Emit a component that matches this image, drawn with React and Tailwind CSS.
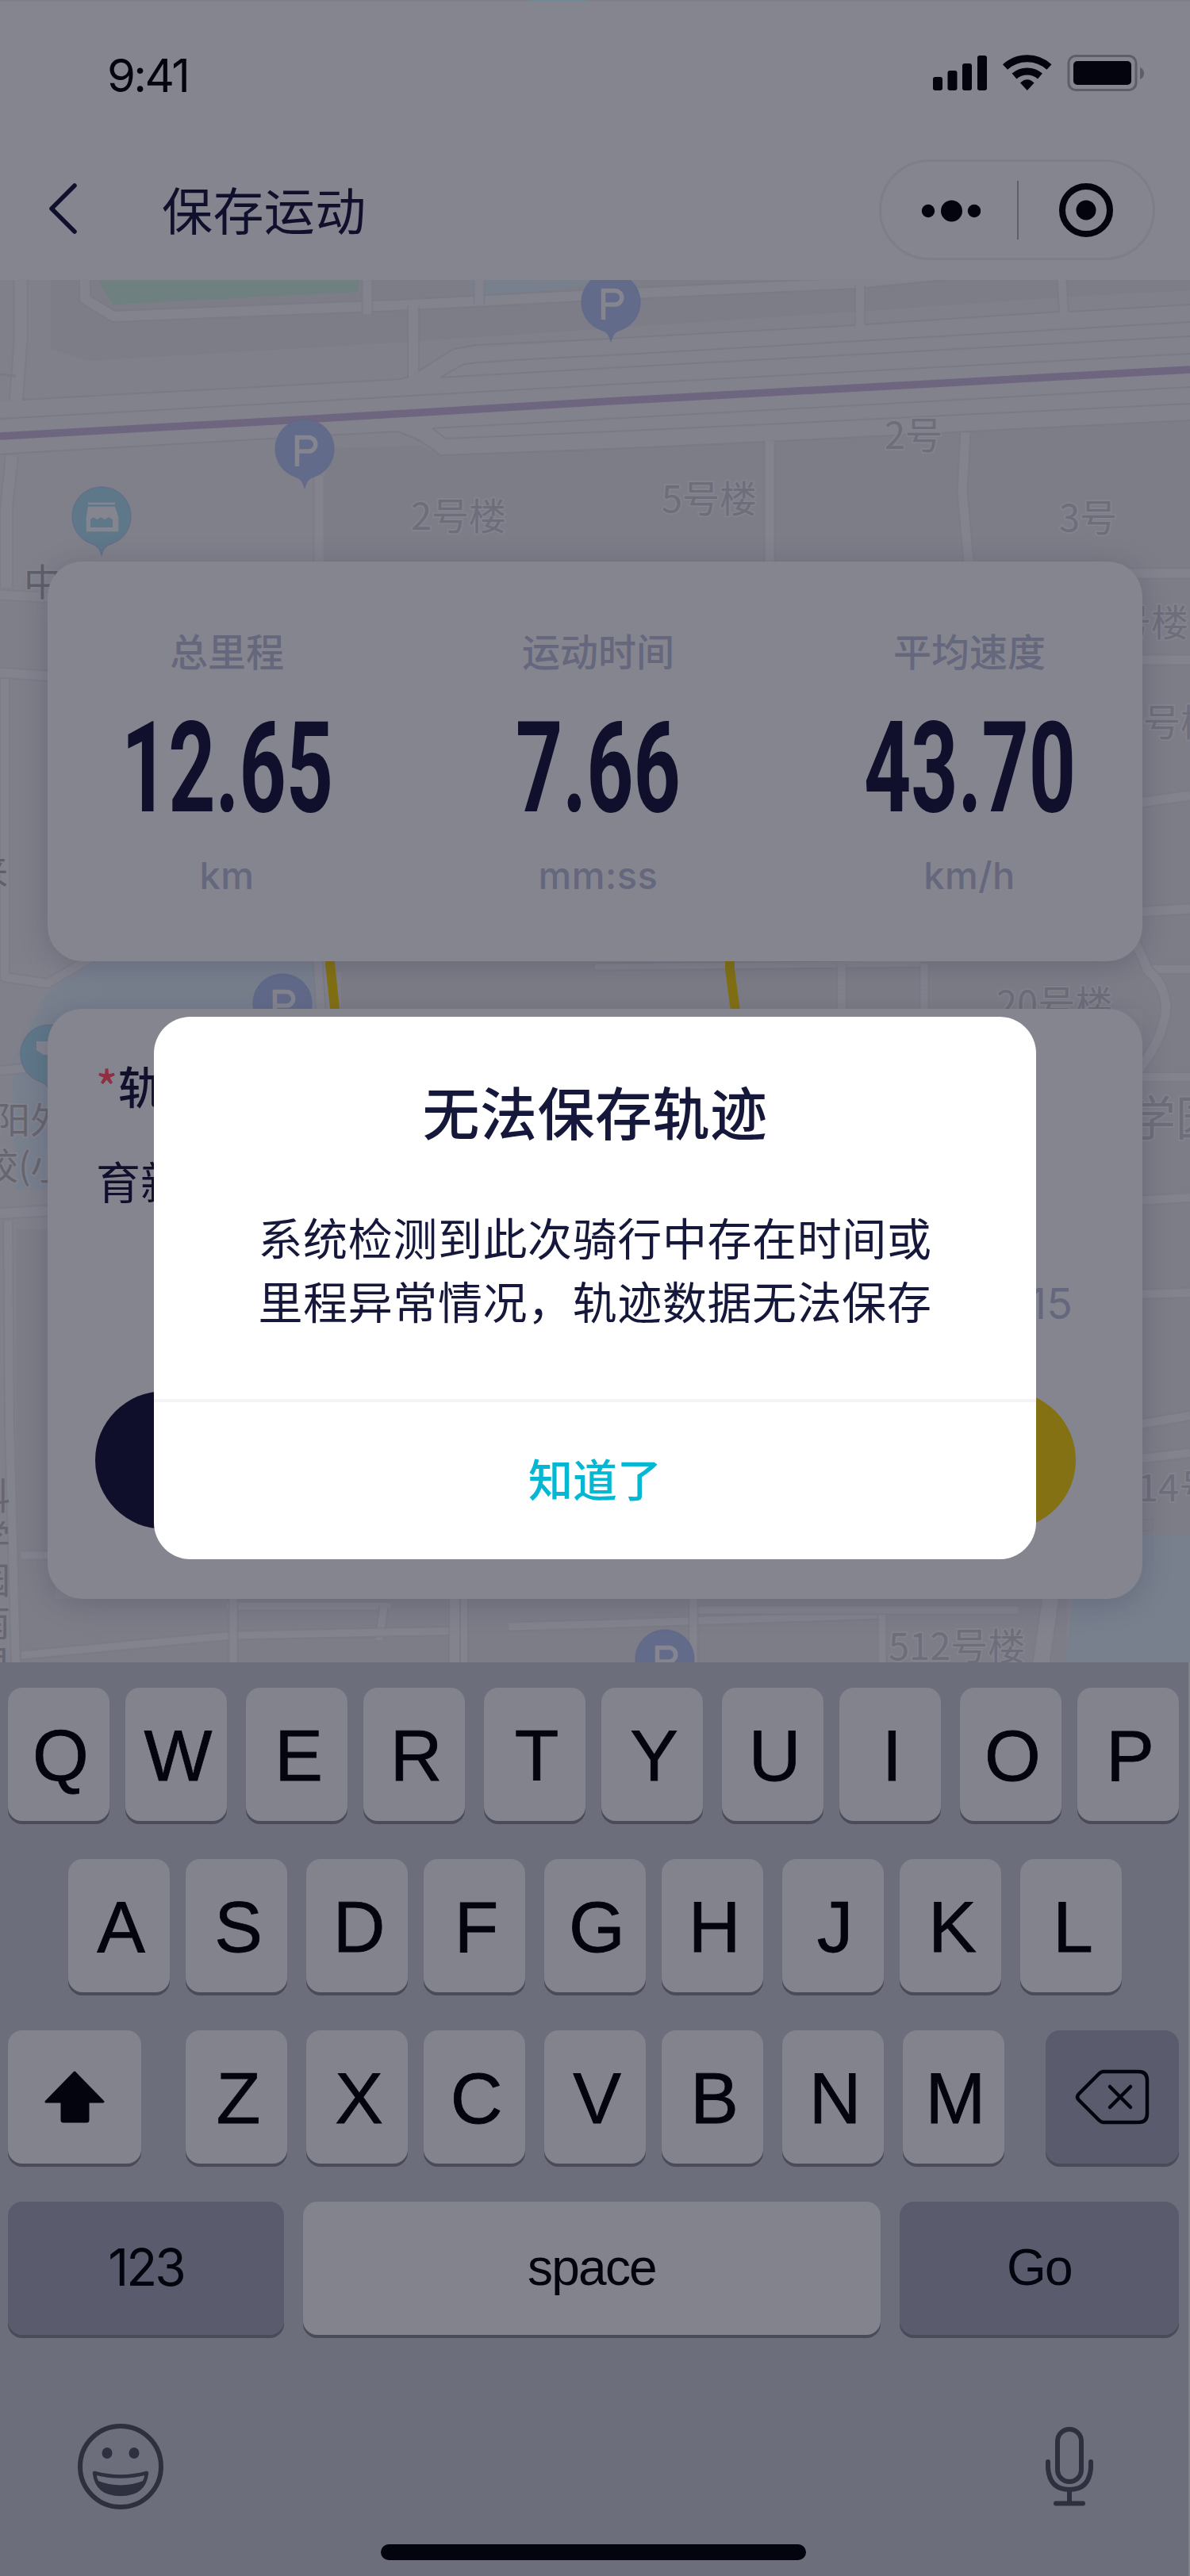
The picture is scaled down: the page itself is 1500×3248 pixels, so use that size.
import React from "react";

const CJK = "font-['Noto_Sans_CJK_SC',sans-serif]";
const ARIAL = "font-['Liberation_Sans',Arial,sans-serif]";
const INTER = "font-['Inter',sans-serif]";

const road = "#83838e";
const edge = "#7a7a86";
const land = "#7d7d88";

// A street: a wide stroke with a slightly darker casing.
function Road({ d, w = 12 }) {
  return (
    <g fill="none" strokeLinejoin="round">
      <path d={d} stroke={edge} strokeOpacity="0.6" strokeWidth={w + 4} />
      <path d={d} stroke={road} strokeWidth={w} />
    </g>
  );
}

function Label({ x, y, size = 47, fill = "#6e6e7a", children }) {
  return (
    <text
      x={x}
      y={y + size * 0.37}
      fontSize={size}
      fill={fill}
      stroke="#83838e"
      strokeWidth="4"
      strokeLinejoin="round"
      paintOrder="stroke"
      fontFamily="'Noto Sans CJK SC', sans-serif"
    >
      {children}
    </text>
  );
}

function Pin({ x, y, fill = "#636b8b", children }) {
  return (
    <g transform={`translate(${x} ${y})`}>
      <path
        d="M0 49C-2 40-5 36-12 34A37 37 0 1 1 12 34C5 36 2 40 0 49Z"
        fill={fill}
        stroke="#5f6789"
        strokeWidth="1.5"
        strokeOpacity="0.6"
      />
      {children}
    </g>
  );
}

function Parking({ x, y }) {
  return (
    <Pin x={x} y={y}>
      <path
        d="M-9.500 21V-15.500H5A8.500 8.500 0 0 1 5 2H-9.500"
        fill="none"
        stroke="#858590"
        strokeWidth="5.500"
      />
    </Pin>
  );
}

function CityMap() {
  return (
    <svg
      className="absolute left-0 top-0 h-[3248px] w-[1500px]"
      viewBox="0 0 1500 3248"
    >
      <rect width="1500" height="3248" fill="#80808b" />
      <rect x="668" y="0" width="72" height="3" fill="#6f8a95" />
      <path d="M64 353V440L112 455L500 432L1078 393L1335 375L1500 366V353Z" fill={land} />
      <path d="M124 353H452V368L142 384Z" fill="#6e8080" />
      <path d="M592 353H760L700 366L592 372Z" fill="#78808e" />
      <path d="M410 565L530 562L555 574L965 557L1500 530V1225H410Z" fill={land} />
      <path d="M0 760H60V848H0ZM10 855H60V1215H10Z" fill="#7f7f8a" />
      <path d="M430 1212H1500V1936H1440V1272H430Z" fill={land} />
      <path d="M20 1550H70V2096H20ZM60 2016H1345V2096H60Z" fill={land} />

      <Road d="M26 345L26 430L20 510" w={15} />
      <path d="M0 472L20 474" stroke={edge} strokeWidth="3" />
      <Road d="M107 345V377L143 399L520 384L750 372L1080 357L1200 345" />
      <Road d="M463 345V396" w={11} />
      <Road d="M604 345V384" w={11} />
      <Road d="M521 386V480" w={12} />
      <Road d="M1084 360V412" w={10} />
      <Road d="M1338 345L1341 395" w={10} />

      {/* Expressway band and the metro line that runs along it */}
      <path d="M0 506L28 504L512 477L572 441L750 429L1084 409L1500 384V530L965 557L555 574L530 553L500 544L28 571L0 572Z" fill="#82828d" />
      <g fill="none" stroke={edge} strokeWidth="2">
        <path d="M28 504L505 478L514 475V390" />
        <path d="M527 468L572 440L600 435L750 428L1078 410M1090 409L1335 393M1348 393L1500 384" />
        <path d="M555 476L583 460Q592 456 750 449L1500 406" />
        <path d="M555 476L750 465L1500 424" />
        <path d="M0 528L750 486L1500 446" />
        <path d="M545 540L750 529L1500 488" />
        <path d="M545 540L562 553L750 545L965 535L1500 509" />
        <path d="M0 573L28 571L500 544Q530 553 555 574L750 567L965 557L1500 530" />
      </g>
      <path d="M0 550L380 529L750 507L1500 466" fill="none" stroke="#6e657e" strokeWidth="9.500" />

      <Road d="M402 600V720" w={11} />
      <Road d="M15 575L8 640V740" w={14} />
      <Road d="M970 556V720" w={11} />
      <Road d="M1217 545L1213 620L1222 720" w={11} />

      <Road d="M0 750L70 754" w={11} />
      <Road d="M0 848L70 853" w={11} />
      <Road d="M6 856V1232L60 1240L118 1206" w={10} />
      <path d="M118 1213H400V1290H60L15 1340L60 1250Z" fill="#78808e" />
      <path d="M15 1340H60V1500H20Z" fill="#78808e" />
      <Road d="M400 1205L405 1280" w={10} />
      <Road d="M0 1350L60 1344" w={10} />
      <Road d="M0 1530L70 1526" w={12} />
      <Road d="M10 1540L12 1800L20 2100" w={10} />
      <Road d="M27 1961H80" w={9} />

      <Road d="M1420 723H1500" w={11} />
      <Road d="M1430 832H1500" w={11} />
      <Road d="M1430 1013L1500 1003" w={11} />
      <Road d="M1430 1150L1500 1146" w={11} />
      <Road d="M1440 1222H1500" w={10} />
      <Road d="M1432 1190L1448 1225Q1468 1240 1470 1272Q1466 1310 1436 1348" w={11} />
      <Road d="M1430 1358H1500" w={10} />
      <Road d="M1430 1514L1500 1510" w={10} />
      <Road d="M1430 1632L1500 1630" w={10} />
      <Road d="M1430 1797L1500 1785" w={10} />
      <Road d="M1430 1840L1500 1832" w={10} />
      <path d="M1440 1916H1453V1930H1440" fill="none" stroke={edge} strokeWidth="2" />
      <Road d="M750 1219L1160 1215" w={7} />
      <Road d="M1061 1215V1280" w={10} />
      <Road d="M1165 1215V1280" w={9} />

      <Road d="M286 2025H492" w={9} />
      <Road d="M484 2025L478 2068" w={9} />
      <Road d="M27 2087L294 2062L588 2056" w={9} />
      <Road d="M294 2010V2100" w={9} />
      <Road d="M573 2010V2100" w={12} />
      <Road d="M585 2010V2100" w={8} />
      <Road d="M641 2051L750 2048L1112 2036" w={9} />
      <Road d="M874 2030H1283" w={9} />
      <Road d="M874 2010V2100" w={9} />
      <Road d="M1112 2036V2100" w={9} />
      <Road d="M1325 2010L1312 2100" w={20} />
      <path d="M1430 1936H1500V2096H1343L1352 2016Z" fill="#78808e" />
      <path d="M1498 2096V3248" stroke="#80808b" strokeWidth="4" />

      {/* Recorded track */}
      <path d="M415 1205L424 1290" stroke="#837113" strokeWidth="12" />
      <path d="M920 1205V1222L929 1290" fill="none" stroke="#837113" strokeWidth="12" />

      <Label x={518} y={651}>2号楼</Label>
      <Label x={834} y={629}>5号楼</Label>
      <Label x={1115} y={549}>2号</Label>
      <Label x={1335} y={653}>3号</Label>
      <Label x={1404} y={785}>号楼</Label>
      <Label x={1441} y={911}>号楼</Label>
      <Label x={1256} y={1266}>20号楼</Label>
      <Label x={1422} y={1410} size={60}>学园</Label>
      <Label x={1434} y={1876}>14号</Label>
      <Label x={1120} y={2076}>512号楼</Label>
      <Label x={30} y={734} fill="#5f5f6a">中</Label>
      <Label x={-35} y={1099} size={45} fill="#5f5f6a">来</Label>
      <Label x={-8} y={1412} size={46} fill="#666671">阳外</Label>
      <Label x={-23} y={1470} size={46} fill="#666671">校(小</Label>
      <text
        x="-10"
        y="1863"
        fontSize="46"
        letterSpacing="7"
        fill="#666671"
        fontFamily="'Noto Sans CJK SC', sans-serif"
        className="[writing-mode:vertical-rl]"
      >
        科学园南里
      </text>

      <Parking x={770} y={382} />
      <Parking x={384} y={567} />
      <Parking x={356} y={1266} />
      <Parking x={838} y={2093} />
      <Pin x={128} y={652} fill="#5f7889">
        <path d="M-17-17H17M-16-12H16L20 0V17H-18V0Z" fill="#858590" stroke="#858590" strokeWidth="2.5" />
        <path d="M-14 13V3L-10 0L-6 3L-1 0L4 3L9 0L14 3V13Z" fill="#5f7889" />
      </Pin>
      <Pin x={63} y={1330} fill="#5f7889">
        <path d="M-17-17H6V0H-8L-17-6Z" fill="#858590" />
      </Pin>
    </svg>
  );
}

function StatusBar() {
  return (
    <div className="flex h-[180px] items-start justify-between pl-[135px] pr-[56px]">
      <span className={`${INTER} mt-[62px] text-[58px] leading-[62px] tracking-[-2.6px] text-[#04040f]`}>
        9:41
      </span>
      <svg className="mt-[62px] h-[56px] w-[270px]" viewBox="1174 64 270 56" fill="#04040f">
        <rect x="1176" y="97" width="12" height="17" rx="3" />
        <rect x="1194.500" y="89" width="12" height="25" rx="3" />
        <rect x="1213" y="80" width="12" height="34" rx="3" />
        <rect x="1232" y="70" width="12" height="44" rx="3" />
        <g fill="none" stroke="#04040f" strokeWidth="9">
          <path d="M1267 84.500A41 41 0 0 1 1322.500 84.500" />
          <path d="M1278.500 96A25 25 0 0 1 1311 96" />
        </g>
        <path d="M1294.800 114L1286 104.500Q1294.800 96 1303.600 104.500Z" />
        <rect x="1347" y="70.500" width="85" height="43" rx="9" fill="none" stroke="#5e5e69" strokeWidth="3" />
        <rect x="1353" y="77" width="73" height="30" rx="5" />
        <path d="M1437 85Q1442 87 1442 92.500Q1442 98 1437 100Z" fill="#5e5e69" />
      </svg>
    </div>
  );
}

function NavBar() {
  return (
    <div className="flex h-[171px] items-start pl-[58px] pr-[44px]">
      <svg className="mt-[46px] h-[68px] w-[42px]" viewBox="60 229 42 68">
        <path d="M96 235L67 264L96 293" fill="none" stroke="#10102c" strokeWidth="5.500" strokeLinecap="round" strokeLinejoin="round" />
      </svg>
      <h1 className={`${CJK} ml-[104px] mt-[32px] text-[64px] leading-[96px] tracking-[0.4px] text-[#10102c]`}>保存运动</h1>
      <div className="ml-auto mt-[19px] flex h-[127px] w-[348px] items-center rounded-full border-[3px] border-[#7e7e89]">
        <svg className="ml-[45px] h-[30px] w-[80px]" viewBox="0 0 80 30" fill="#04040f">
          <circle cx="14" cy="16" r="8.200" />
          <circle cx="43.500" cy="16" r="13.500" />
          <circle cx="72" cy="16" r="8.200" />
        </svg>
        <span className="ml-[46px] h-[74px] w-[2px] bg-[#5f5f6b]" />
        <svg className="ml-[50px] h-[70px] w-[70px]" viewBox="0 0 70 70">
          <circle cx="35" cy="35" r="30" fill="none" stroke="#04040f" strokeWidth="8" />
          <circle cx="35" cy="35" r="12.500" fill="#04040f" />
        </svg>
      </div>
    </div>
  );
}

function Stat({ label, value, unit }) {
  return (
    <div className="flex w-[468px] shrink-0 flex-col items-center">
      <span className={`${CJK} text-[48px] font-medium leading-[72px] text-[#65677c]`}>{label}</span>
      <span className="mt-[21px] flex h-[186px] w-[300px] items-center justify-center">
        <span className="scale-x-[0.65] whitespace-nowrap font-['Roboto',sans-serif] text-[159px] font-bold leading-[186px] text-[#10102c]">
          {value}
        </span>
      </span>
      <span className={`${INTER} mt-[12px] text-[47px] font-medium leading-[60px] tracking-[0.500px] text-[#65677c]`}>
        {unit}
      </span>
    </div>
  );
}

const cardShadow = "shadow-[0_6px_36px_rgba(30,30,60,0.22)]";

function StatsCard() {
  return (
    <section className={`flex h-[504px] justify-center rounded-[44px] bg-[#858590] pl-[8px] pt-[75px] ${cardShadow}`}>
      <Stat label="总里程" value="12.65" unit="km" />
      <Stat label="运动时间" value="7.66" unit="mm:ss" />
      <Stat label="平均速度" value="43.70" unit="km/h" />
    </section>
  );
}

function FormCard() {
  return (
    <section className={`mt-[60px] flex h-[744px] flex-col rounded-[44px] bg-[#858590] px-[60px] pt-[54px] ${cardShadow}`}>
      <div className={`${CJK} flex pl-[1px] text-[56px] font-medium leading-[84px] text-[#10102c]`}>
        <span className="w-[28px] text-[#902f40]">*</span>
        <span>轨迹</span>
      </div>
      <div className={`${CJK} mt-[36px] pl-[1px] text-[56px] leading-[84px] text-[#10102c]`}>育新</div>
      <div className={`${INTER} mt-[82px] pr-[28px] text-right text-[54px] leading-[64px] text-[#65677c]`}>15</div>
      <div className="mt-[78px] flex w-[1236px] justify-between">
        <div className="h-[174px] w-[588px] rounded-full bg-[#0f0f2b]" />
        <div className="h-[174px] w-[588px] rounded-full bg-[#837113]" />
      </div>
    </section>
  );
}

function Dialog() {
  return (
    <div className={`${CJK} absolute left-[194px] top-[1282px] flex h-[684px] w-[1112px] flex-col overflow-hidden rounded-[46px] bg-white text-center text-[#16183b]`}>
      <h2 className="mt-[64px] text-[72px] font-medium leading-[108px] tracking-[0.500px]">无法保存轨迹</h2>
      <p className="mt-[65px] text-[56px] leading-[80px] tracking-[0.600px]">
        系统检测到此次骑行中存在时间或
        <br />
        里程异常情况，轨迹数据无法保存
      </p>
      <div className="mt-[85px] flex flex-1 items-center justify-center border-t-4 border-[#f4f4f6] pb-[8px] text-[56px] font-medium text-[#04b7d3]">
        知道了
      </div>
    </div>
  );
}

const keyBase = "flex h-[168px] shrink-0 items-center justify-center rounded-[18px] shadow-[0_4px_0_#4a4a58] text-[#04040f]";
const letterKey = `${keyBase} ${ARIAL} w-[128px] bg-[#83838e] pl-[5px] pt-[3px] text-[91px] leading-none [-webkit-text-stroke:0.8px_#04040f]`;

function Letters({ keys }) {
  return keys.map(([c, gap]) => (
    <div key={c} className={`${letterKey} ${gap}`}>
      {c}
    </div>
  ));
}

const ROW_1 = [["Q", ""], ["W", "ml-5"], ["E", "ml-6"], ["R", "ml-5"], ["T", "ml-6"], ["Y", "ml-5"], ["U", "ml-6"], ["I", "ml-5"], ["O", "ml-6"], ["P", "ml-5"]];
const ROW_2 = [["A", ""], ["S", "ml-5"], ["D", "ml-6"], ["F", "ml-5"], ["G", "ml-6"], ["H", "ml-5"], ["J", "ml-6"], ["K", "ml-5"], ["L", "ml-6"]];
const ROW_3 = [["Z", "ml-14"], ["X", "ml-6"], ["C", "ml-5"], ["V", "ml-6"], ["B", "ml-5"], ["N", "ml-6"], ["M", "ml-6"]];

function Keyboard() {
  return (
    <div className="flex h-[1152px] w-[1498px] flex-col bg-[#6c6e7b] pt-8">
      <div className="flex pl-[10px]">
        <Letters keys={ROW_1} />
      </div>
      <div className="mt-12 flex pl-[86px]">
        <Letters keys={ROW_2} />
      </div>
      <div className="mt-12 flex pl-[10px]">
        <div className={`${keyBase} w-[168px] bg-[#83838e]`}>
          <svg className="h-[70px] w-[80px]" viewBox="54 2607 80 70">
            <path d="M94 2611L130 2648H111V2671Q111 2673 109 2673H80Q78 2673 78 2671V2648H58Z" fill="#04040f" stroke="#04040f" strokeWidth="3" strokeLinejoin="round" />
          </svg>
        </div>
        <Letters keys={ROW_3} />
        <div className={`${keyBase} ml-[52px] w-[168px] bg-[#5a5c6d]`}>
          <svg className="h-[72px] w-[96px]" viewBox="1354 2608 96 72" fill="none" stroke="#04040f" strokeWidth="4.500" strokeLinecap="round" strokeLinejoin="round">
            <path d="M1391 2612H1435Q1446 2612 1446 2623V2665Q1446 2676 1435 2676H1391Q1388 2676 1385 2673L1360 2648Q1356 2644 1360 2640L1385 2615Q1388 2612 1391 2612Z" />
            <path d="M1399 2631L1425 2657M1425 2631L1399 2657" />
          </svg>
        </div>
      </div>
      <div className="mt-12 flex pl-[10px] text-[64px] leading-none tracking-[-1.800px]">
        <div className={`${keyBase} ${INTER} w-[348px] bg-[#5a5c6d] pb-[2px] tracking-[-3px]`}>123</div>
        <div className={`${keyBase} ${ARIAL} ml-6 w-[728px] bg-[#83838e] pb-[2px]`}>space</div>
        <div className={`${keyBase} ${ARIAL} ml-6 w-[352px] bg-[#5a5c6d] pb-[2px]`}>Go</div>
      </div>
      <div className="mt-[110px] flex justify-between pl-[96px] pr-[118px]">
        <svg className="h-[112px] w-[112px]" viewBox="96 3054 112 112">
          <circle cx="152" cy="3110" r="51" fill="none" stroke="#2e3040" strokeWidth="6" />
          <ellipse cx="135" cy="3093" rx="6.500" ry="7" fill="#2e3040" />
          <ellipse cx="169" cy="3093" rx="6.500" ry="7" fill="#2e3040" />
          <path d="M119 3118Q152 3127 185 3118Q182 3145 152 3145Q122 3145 119 3118Z" fill="none" stroke="#2e3040" strokeWidth="4.500" strokeLinejoin="round" />
          <path d="M121 3127Q152 3140 183 3127Q177 3146 152 3146Q127 3146 121 3127Z" fill="#2e3040" />
        </svg>
        <svg className="h-[112px] w-[64px]" viewBox="1316 3054 64 112" fill="none" stroke="#2e3040" strokeWidth="6" strokeLinecap="round">
          <rect x="1333" y="3063" width="30" height="66" rx="15" />
          <path d="M1321 3104V3112Q1323 3139 1348 3139Q1373 3139 1375 3112V3104" />
          <path d="M1348 3140V3156M1331 3156.500H1365" />
        </svg>
      </div>
      <div className="ml-[480px] mt-[42px] h-5 w-[536px] rounded-full bg-[#04040f]" />
    </div>
  );
}

export default function App() {
  return (
    <main className="relative h-[3248px] w-[1500px] overflow-hidden bg-[#80808b]">
      <CityMap />
      <div className="relative flex h-full flex-col pt-[2px]">
        <header className="h-[351px] bg-[#858590]">
          <StatusBar />
          <NavBar />
        </header>
        <div className="h-[1743px] px-[60px] pt-[355px]">
          <StatsCard />
          <FormCard />
        </div>
        <Keyboard />
      </div>
      <Dialog />
    </main>
  );
}
